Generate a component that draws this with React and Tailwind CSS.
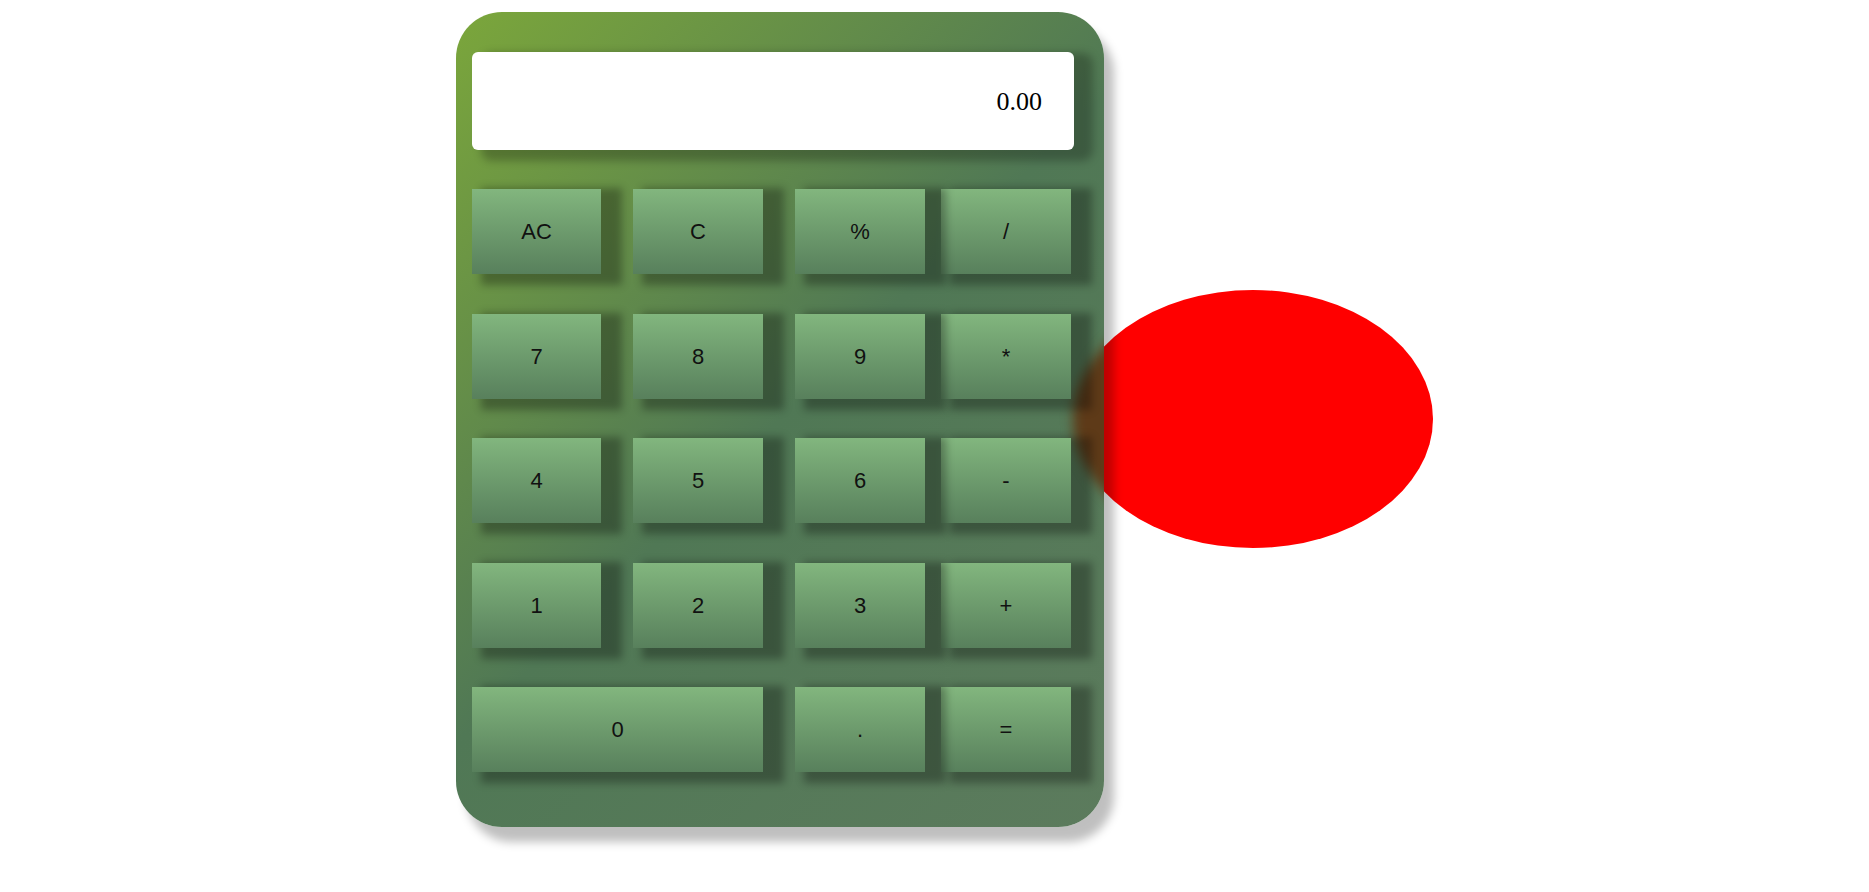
import React from "react";

const btnBase =
  "relative h-[85px] flex items-center justify-center bg-linear-to-b from-[#82b67e] to-[#58805c] shadow-[15px_5px_8px_6px_rgba(0,0,0,0.3)] text-[22px] text-[#111] font-['Liberation_Sans',Arial,sans-serif]";

function Btn({ label, className }) {
  return <div className={`${btnBase} ${className}`}>{label}</div>;
}

const rows = [
  ["AC", "C", "%", "/"],
  ["7", "8", "9", "*"],
  ["4", "5", "6", "-"],
  ["1", "2", "3", "+"],
];

export default function App() {
  return (
    <div className="relative w-full h-[892px] bg-white overflow-hidden">
      <div className="absolute left-[1073px] top-[290px] w-[360px] h-[258px] rounded-[50%] bg-[#ff0000] z-0" />
      <div className="pl-[456px] pt-[12px]">
        <div className="relative z-10 w-[648px] h-[815px] rounded-[46px] overflow-hidden bg-[linear-gradient(135deg,#7ba63b_0%,#507855_50%,#5c7b5d_100%)] shadow-[10px_15px_10px_rgba(0,0,0,0.25)] pt-[40px] pl-[16px]">
          <div className="absolute left-[617px] top-[278px] w-[360px] h-[258px] rounded-[50%] bg-[#5e3a18] blur-[6px]" />
          <div className="flex flex-col gap-[39.5px]">
            <div className="relative z-10 w-[602px] h-[98px] -mb-[0.5px] rounded-md bg-white shadow-[14px_6px_8px_5px_rgba(0,0,0,0.25)] flex items-center justify-end pr-[32px] text-[26px] text-black font-['Liberation_Serif','Times_New_Roman',serif]">
              0.00
            </div>
            {rows.map((r, i) => (
              <div key={i} className="flex">
                <Btn label={r[0]} className="z-10 w-[129px]" />
                <Btn label={r[1]} className="z-10 w-[130px] ml-[32px]" />
                <Btn label={r[2]} className="z-10 w-[130px] ml-[32px]" />
                <Btn label={r[3]} className="z-0 w-[130px] ml-[16px]" />
              </div>
            ))}
            <div className="flex">
              <Btn label="0" className="z-10 w-[291px]" />
              <Btn label="." className="z-10 w-[130px] ml-[32px]" />
              <Btn label="=" className="z-0 w-[130px] ml-[16px]" />
            </div>
          </div>
        </div>
      </div>
    </div>
  );
}
